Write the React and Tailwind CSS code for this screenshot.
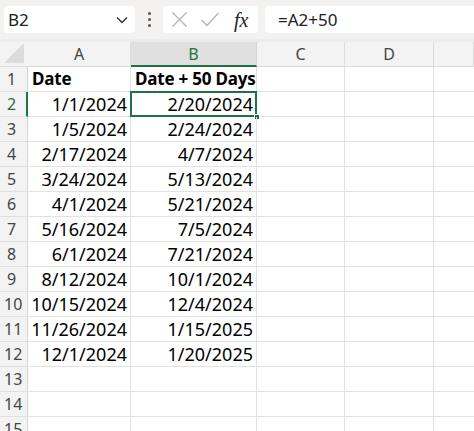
import React from "react";

const rows = [
  ["Date", "Date + 50 Days"],
  ["1/1/2024", "2/20/2024"],
  ["1/5/2024", "2/24/2024"],
  ["2/17/2024", "4/7/2024"],
  ["3/24/2024", "5/13/2024"],
  ["4/1/2024", "5/21/2024"],
  ["5/16/2024", "7/5/2024"],
  ["6/1/2024", "7/21/2024"],
  ["8/12/2024", "10/1/2024"],
  ["10/15/2024", "12/4/2024"],
  ["11/26/2024", "1/15/2025"],
  ["12/1/2024", "1/20/2025"],
  ["", ""],
  ["", ""],
  ["", ""],
];

const font = { fontFamily: '"Noto Sans", "Open Sans", sans-serif' };

function Toolbar() {
  return (
    <div className="flex items-start h-[39px] bg-[#f3f2f1] pt-[6px] pl-[4px]">
      <div className="w-[131px] h-[27px] bg-white rounded-[4px] flex items-center justify-between pl-[4px] pr-[7px]">
        <span className="text-[17px] text-[#222]">B2</span>
        <svg width="12" height="8" viewBox="0 0 12 8" fill="none">
          <path d="M1 1.5 L6 6.5 L11 1.5" stroke="#333" strokeWidth="1.4" />
        </svg>
      </div>
      <div className="w-[28px] h-[27px] flex flex-col items-center justify-center gap-[3px]">
        <span className="w-[3px] h-[3px] rounded-full bg-[#555]" />
        <span className="w-[3px] h-[3px] rounded-full bg-[#555]" />
        <span className="w-[3px] h-[3px] rounded-full bg-[#555]" />
      </div>
      <div className="w-[95px] h-[27px] bg-white rounded-[4px] flex items-center pl-[8px]">
        <svg width="17" height="17" viewBox="0 0 17 17" fill="none">
          <path d="M1.5 1.5 L15.5 15.5 M15.5 1.5 L1.5 15.5" stroke="#b4b4b4" strokeWidth="1.3" />
        </svg>
        <svg width="20" height="17" viewBox="0 0 20 17" fill="none" className="ml-[12px]">
          <path d="M1.5 9 L7 14.5 L18.5 2" stroke="#b4b4b4" strokeWidth="1.3" />
        </svg>
        <span
          className="ml-[14px] text-[20px] italic text-[#222] leading-none"
          style={{ fontFamily: '"Liberation Serif", serif' }}
        >
          fx
        </span>
      </div>
      <div className="flex-1 h-[27px] bg-white rounded-l-[4px] ml-[7px] flex items-center pl-[13px]">
        <span className="text-[17px] text-[#222]">=A2+50</span>
      </div>
    </div>
  );
}

const cols = ["A", "B", "C", "D", ""];

export default function App() {
  return (
    <div className="w-[474px] h-[431px] overflow-hidden bg-white" style={font}>
      <Toolbar />
      <div className="h-[3px] bg-[#ececec]" />
      <div className="grid grid-cols-[28px_103px_126px_88px_89px_1fr]">
        {/* header row */}
        <div className="h-[25px] bg-[#f3f3f3] border-b border-[#dcdcdc] relative overflow-hidden">
          <svg width="22" height="22" viewBox="0 0 22 22" className="absolute right-[3px] bottom-[2px]">
            <path d="M21 1 L21 21 L1 21 Z" fill="#dcdcdc" />
          </svg>
        </div>
        {cols.map((c, i) => (
          <div
            key={i}
            className={
              c === "B"
                ? "h-[25px] bg-[#e0e0e0] border-b-2 border-[#1f7244] border-r border-r-[#d4d4d4] flex items-center justify-center text-[16px] text-[#1f7244]"
                : "h-[25px] bg-[#f3f3f3] border-b border-r border-[#dcdcdc] flex items-center justify-center text-[16px] text-[#444]"
            }
          >
            {c}
          </div>
        ))}

        {rows.map((r, i) => {
          const n = i + 1;
          const sel = n === 2;
          const head = n === 1;
          return (
            <React.Fragment key={n}>
              <div
                className={
                  sel
                    ? "h-[25px] bg-[#f3f3f3] border-b border-[#e0e0e0] border-r-2 border-r-[#1f7244] flex items-center pl-[4px] text-[16px] text-[#1f7244]"
                    : "h-[25px] bg-[#f3f3f3] border-b border-[#e0e0e0] border-r border-r-[#d4d4d4] flex items-center pl-[4px] text-[16px] text-[#444]"
                }
              >
                <span className="w-[15px] text-center">{n}</span>
              </div>
              <div
                className={
                  head
                    ? "h-[25px] border-b border-r border-[#e1e1e1] flex items-center pl-[4px] text-[17px] tracking-[-0.2px] font-bold text-black whitespace-nowrap"
                    : "h-[25px] border-b border-r border-[#e1e1e1] flex items-center justify-end pr-[3px] text-[18px] text-black whitespace-nowrap"
                }
              >
                {r[0]}
              </div>
              <div
                className={
                  head
                    ? "h-[25px] border-b border-r border-[#e1e1e1] flex items-center pl-[4px] text-[17px] tracking-[-0.2px] font-bold text-black whitespace-nowrap overflow-hidden"
                    : "h-[25px] border-b border-r border-[#e1e1e1] flex items-center justify-end pr-[3px] text-[18px] text-black whitespace-nowrap relative"
                }
              >
                {r[1]}
                {sel && (
                  <>
                    <div className="absolute -left-px -top-px -right-px -bottom-px border-2 border-[#1f7244]" />
                    <div className="absolute -right-[4px] -bottom-[4px] w-[6px] h-[6px] bg-[#1f7244] border border-white" />
                  </>
                )}
              </div>
              <div className="h-[25px] border-b border-r border-[#e1e1e1]" />
              <div className="h-[25px] border-b border-r border-[#e1e1e1]" />
              <div className="h-[25px] border-b border-[#e1e1e1]" />
            </React.Fragment>
          );
        })}
      </div>
    </div>
  );
}
